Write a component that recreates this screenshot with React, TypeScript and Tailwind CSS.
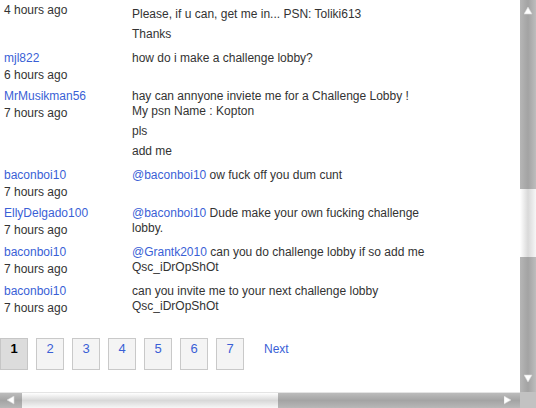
import React from 'react';

type Entry = {
  name?: string;
  time: string;
  paras: React.ReactNode[];
  first?: boolean;
};

const Mention = ({ children }: { children: React.ReactNode }) => (
  <span className="text-[#3a5fd6]">{children}</span>
);

const ENTRIES: Entry[] = [
  {
    time: '4 hours ago',
    first: true,
    paras: ['Please, if u can, get me in... PSN: Toliki613', 'Thanks'],
  },
  { name: 'mjl822', time: '6 hours ago', paras: ['how do i make a challenge lobby?'] },
  {
    name: 'MrMusikman56',
    time: '7 hours ago',
    paras: [
      <>
        hay can annyone inviete me for a Challenge Lobby !<br />
        My psn Name : Kopton
      </>,
      'pls',
      'add me',
    ],
  },
  {
    name: 'baconboi10',
    time: '7 hours ago',
    paras: [
      <>
        <Mention>@baconboi10</Mention> ow fuck off you dum cunt
      </>,
    ],
  },
  {
    name: 'EllyDelgado100',
    time: '7 hours ago',
    paras: [
      <>
        <Mention>@baconboi10</Mention> Dude make your own fucking challenge
        <br />
        lobby.
      </>,
    ],
  },
  {
    name: 'baconboi10',
    time: '7 hours ago',
    paras: [
      <>
        <Mention>@Grantk2010</Mention> can you do challenge lobby if so add me
        <br />
        Qsc_iDrOpShOt
      </>,
    ],
  },
  {
    name: 'baconboi10',
    time: '7 hours ago',
    paras: [
      <>
        can you invite me to your next challenge lobby
        <br />
        Qsc_iDrOpShOt
      </>,
    ],
  },
];

function CommentRow({ entry }: { entry: Entry }) {
  return (
    <div className="flex items-start pb-[4px]">
      <div className="w-[128px] shrink-0 leading-[17px]">
        {entry.name && <div className="text-[#3a5fd6]">{entry.name}</div>}
        <div>{entry.time}</div>
      </div>
      <div className={`flex flex-col gap-[5px] pb-[4px] leading-[15px] ${entry.first ? 'pt-[5px]' : 'pt-[1px]'}`}>
        {entry.paras.map((p, i) => (
          <p key={i}>{p}</p>
        ))}
      </div>
    </div>
  );
}

function Arrow({ dir }: { dir: 'up' | 'down' | 'left' | 'right' }) {
  const pts = {
    up: '4,1 8,8 0,8',
    down: '0,1 8,1 4,8',
    left: '1,4 8,0 8,8',
    right: '0,0 7,4 0,8',
  }[dir];
  return (
    <svg width="9" height="9" viewBox="0 0 9 9">
      <polygon points={pts} fill="#ffffff" stroke="#d8d8d8" strokeWidth="0.6" />
    </svg>
  );
}

function VScroll() {
  return (
    <div className="w-[16px] shrink-0 flex flex-col bg-linear-to-r from-[#b6b6b6] via-[#a3a3a3] to-[#bdbdbd]">
      <div className="h-[22px] flex items-start justify-center pt-[6px]">
        <Arrow dir="up" />
      </div>
      <div className="h-[167px]" />
      <div className="h-[68px] bg-linear-to-r from-white via-[#d9d9d9] to-[#f6f6f6]" />
      <div className="flex-1" />
      <div className="h-[22px] flex items-end justify-center pb-[9px]">
        <Arrow dir="down" />
      </div>
    </div>
  );
}

function HScroll() {
  return (
    <div className="flex-1 flex border-t border-[#e4e4e4] bg-linear-to-b from-[#bcbcbc] via-[#a4a4a4] to-[#b8b8b8]">
      <div className="w-[22px] flex items-center justify-start pl-[6px]">
        <Arrow dir="left" />
      </div>
      <div className="w-[256px] bg-linear-to-b from-white via-[#d8d8d8] to-[#f6f6f6]" />
      <div className="flex-1 flex items-center justify-end pr-[7px]">
        <Arrow dir="right" />
      </div>
    </div>
  );
}

export default function App() {
  const pages = [1, 2, 3, 4, 5, 6, 7];
  return (
    <div className="w-[536px] h-[408px] flex flex-col bg-white overflow-hidden font-['Liberation_Sans',Arial,sans-serif] text-[12px] text-[#333333]">
      <div className="flex flex-1 min-h-0">
        <div className="flex-1 min-w-0 overflow-hidden pl-[4px] pt-[2px]">
          {ENTRIES.map((e, i) => (
            <CommentRow key={i} entry={e} />
          ))}

          {/* Pagination */}
          <div className="flex items-start gap-[8px] mt-[16px] -ml-[4px]">
            {pages.map(n => (
              <div
                key={n}
                className={
                  n === 1
                    ? 'w-[28px] h-[32px] border border-[#c6c6c6] bg-[#dcdcdc] text-center pt-[2px] leading-[15px] text-[13px] font-bold text-black'
                    : 'w-[28px] h-[32px] border border-[#c9c9c9] bg-[#f4f4f4] text-center pt-[2px] leading-[15px] text-[13px] text-[#3a5fd6]'
                }
              >
                {n}
              </div>
            ))}
            <div className="ml-[12px] pt-[4px] leading-[15px] text-[#3a5fd6]">Next</div>
          </div>
        </div>
        <VScroll />
      </div>
      <div className="flex h-[16px] shrink-0">
        <HScroll />
        <div className="w-[16px] bg-[#c2c2c2]" />
      </div>
    </div>
  );
}
